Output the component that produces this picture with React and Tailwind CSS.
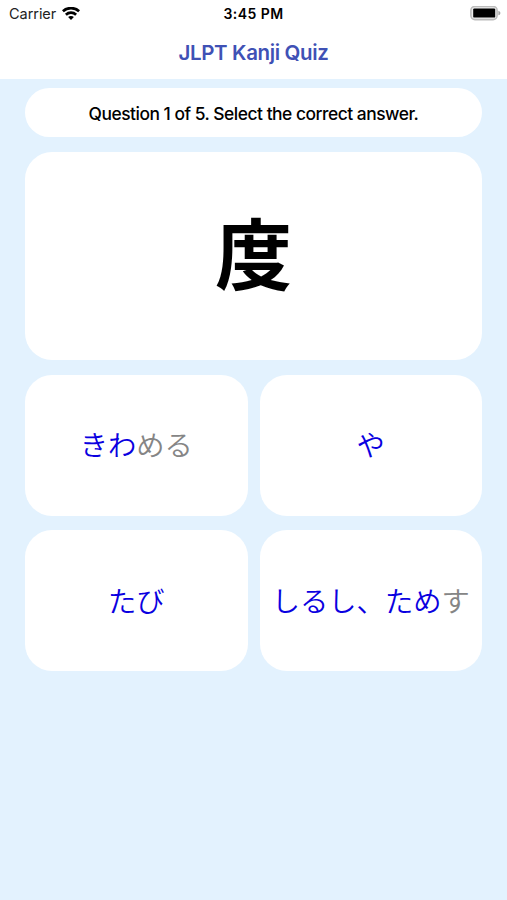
const answers = [
  { reading: 'きわ', okurigana: 'める' },
  { reading: 'や', okurigana: '' },
  { reading: 'たび', okurigana: '' },
  { reading: 'しるし、ため', okurigana: 'す' }
];

function WifiIcon() {
  return (
    <svg className="h-[14px] w-[18px]" viewBox="0 0 18 14" fill="none" stroke="black" strokeWidth="2.7">
      <path d="M.9 4.2C5.4.1 12.6.1 17.1 4.2" />
      <path d="M3.9 7.7c2.9-2.7 7.3-2.7 10.2 0" />
      <path d="M9 13l-2.9-3c1.6-1.5 4.2-1.5 5.8 0z" fill="black" stroke="none" />
    </svg>
  );
}

function BatteryIcon() {
  return (
    <svg className="h-[15px] w-[31px]" viewBox="0 0 31 15">
      <rect x="0.9" y="0.4" width="26.2" height="13.2" rx="4" fill="#ededed" stroke="#bcbcbc" strokeWidth="1.6" />
      <rect x="3.2" y="2.4" width="22" height="9.2" rx="1.2" fill="black" />
      <path d="M28.4 4.7c2.6.9 2.6 3.7 0 4.6z" fill="#a3a3a3" />
    </svg>
  );
}

function StatusBar() {
  return (
    <div className="grid h-[27px] grid-cols-3 items-center text-black">
      <div className="flex items-center gap-[6px] pl-[9px]">
        <span className="pt-px text-[14.5px] leading-none tracking-[-0.05px] text-[#222]">Carrier</span>
        <WifiIcon />
      </div>
      <div className="pt-px text-center text-[14px] font-semibold leading-none tracking-[0.45px]">3:45 PM</div>
      <div className="flex justify-end pr-[6px]">
        <BatteryIcon />
      </div>
    </div>
  );
}

function Answer({ reading, okurigana }) {
  return (
    <button className="flex h-[141px] items-center justify-center whitespace-nowrap rounded-[27px] bg-white pb-[2px] font-['Noto_Sans_CJK_JP',sans-serif] text-[28.3px] font-[350] leading-none text-[#0a00e0]">
      <span>{reading}</span>
      {okurigana ? <span className="text-[#858585]">{okurigana}</span> : null}
    </button>
  );
}

export default function App() {
  return (
    <div className="min-h-screen bg-[#e3f2fe] font-['Inter',sans-serif]">
      <header className="h-[79px] bg-white">
        <StatusBar />
        <h1 className="flex h-[52px] items-center justify-center pt-px text-[20.5px] font-semibold leading-none tracking-[-0.35px] text-[#3f51b5]">
          JLPT Kanji Quiz
        </h1>
      </header>

      <main className="flex flex-col gap-[15px] px-[25px] pt-[9.4px]">
        <p className="flex h-[49px] items-center justify-center rounded-full bg-white pt-px text-[17.4px] font-medium leading-none tracking-[-0.48px] text-black">
          Question 1 of 5. Select the correct answer.
        </p>
        <div className="flex h-[207.5px] items-center justify-center rounded-[27px] bg-white pb-[11px] font-['Noto_Sans_CJK_JP',sans-serif] text-[77px] font-bold leading-none text-black">
          度
        </div>
        <div className="grid grid-cols-2 gap-x-[12px] gap-y-[14.5px]">
          {answers.map((answer) => (
            <Answer key={answer.reading} {...answer} />
          ))}
        </div>
      </main>
    </div>
  );
}
